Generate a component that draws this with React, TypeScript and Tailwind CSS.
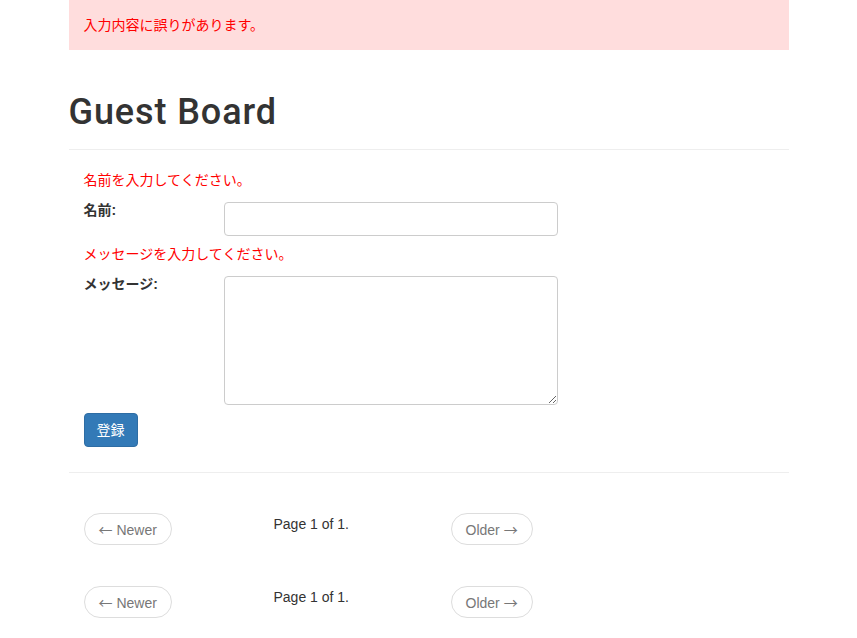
import React from 'react';

const font = { fontFamily: '"Liberation Sans", "Noto Sans CJK JP", sans-serif' };
const arrowFont = { fontFamily: '"Noto Sans CJK JP", sans-serif' };

const Pager = () => (
  <div className="grid grid-cols-[190px_177px_auto] items-start">
    <div>
      <button className="h-[32px] px-[14px] rounded-full border border-[#ddd] bg-white text-[#777] text-[14px] leading-[20px]">
        <span style={arrowFont}>←</span> Newer
      </button>
    </div>
    <div className="text-[14px] text-[#333] leading-[20px] pt-[1px]">Page 1 of 1.</div>
    <div>
      <button className="h-[32px] px-[14px] rounded-full border border-[#ddd] bg-white text-[#777] text-[14px] leading-[20px]">
        Older <span style={arrowFont}>→</span>
      </button>
    </div>
  </div>
);

export default function App() {
  return (
    <div className="min-h-screen bg-white text-[#333]" style={font}>
      <div className="w-[750px] mx-auto px-[15px]">
        {/* alert */}
        <div className="h-[50px] bg-[#fdd] px-[15px] flex items-center text-[14px] text-[#f00]">
          入力内容に誤りがあります。
        </div>

        <h1
          className="mt-[42px] text-[36px] leading-[40px] font-medium pb-[17px] border-b border-[#eee] tracking-[0.9px]"
          style={{ fontFamily: 'Roboto, "Liberation Sans", sans-serif' }}
        >
          Guest Board
        </h1>

        <form className="px-[15px] pb-[25px] border-b border-[#eee]">
          <div className="mt-[20px] text-[14px] leading-[20px] text-[#f00]">名前を入力してください。</div>
          <div className="mt-[12px] flex items-start">
            <label className="w-[140px] text-[14px] leading-[20px] font-bold -mt-[2px]">名前:</label>
            <input className="w-[334px] h-[34px] border border-[#ccc] rounded-[4px] px-[12px] text-[14px] outline-none" />
          </div>
          <div className="mt-[8px] text-[14px] leading-[20px] text-[#f00]">メッセージを入力してください。</div>
          <div className="mt-[12px] flex items-start">
            <label className="w-[140px] text-[14px] leading-[20px] font-bold -mt-[2px]">メッセージ:</label>
            <textarea className="w-[334px] h-[129px] border border-[#ccc] rounded-[4px] px-[12px] py-[6px] text-[14px] outline-none" />
          </div>
          <button type="button" className="mt-[8px] w-[54px] h-[34px] rounded-[4px] bg-[#337ab7] border border-[#2e6da4] text-white text-[14px]">
            登録
          </button>
        </form>

        <div className="px-[15px]">
          <div className="mt-[40px]">
            <Pager />
          </div>
          <div className="mt-[41px]">
            <Pager />
          </div>
        </div>
      </div>
    </div>
  );
}
